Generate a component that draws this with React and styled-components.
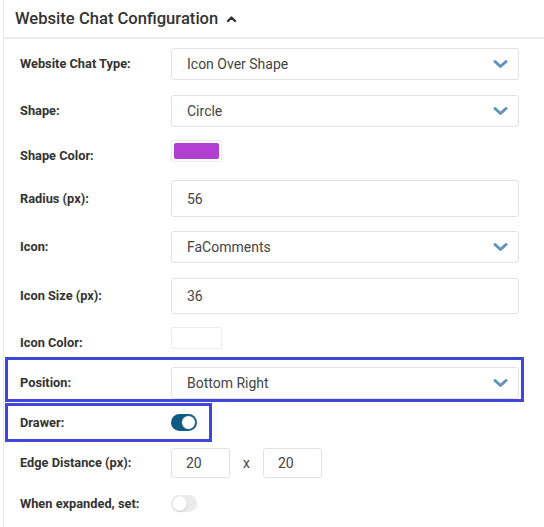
import React from 'react';
import styled, { createGlobalStyle } from 'styled-components';

const GlobalStyle = createGlobalStyle`
  body {
    margin: 0;
    background: #fff;
    font-family: Roboto, "Liberation Sans", sans-serif;
  }
`;

const Panel = styled.div`
  margin-left: 3px;
  width: 541px;
  height: 527px;
  border-left: 1px solid #e9e9e9;
  box-sizing: border-box;
  overflow: hidden;
`;

const Header = styled.div`
  display: flex;
  align-items: center;
  gap: 8px;
  height: 37px;
  padding-left: 11px;
  border-bottom: 2px solid #ebebeb;
  font-size: 16.6px;
  font-weight: 500;
  color: #333;
`;

const Body = styled.div`
  padding: 9px 0 0 16px;
`;

const Row = styled.div`
  display: grid;
  grid-template-columns: 151px auto;
  align-items: ${p => (p.$top ? 'start' : 'center')};
  margin-top: ${p => p.$mt || 0}px;
`;

const Label = styled.label`
  font-size: 12.8px;
  font-weight: 700;
  line-height: 16px;
  color: #333;
  padding-top: ${p => (p.$offset ? 8 : 0)}px;
`;

const Highlight = styled.div`
  width: fit-content;
  margin-left: -15px;
  margin-top: ${p => p.$mt || 0}px;
  border: 3px solid #3f46da;
  padding: ${p => p.$pad};
`;

const SelectBox = styled.div`
  display: flex;
  align-items: center;
  justify-content: space-between;
  width: 348px;
  height: 32px;
  box-sizing: border-box;
  padding: 0 10px 0 15px;
  border: 1px solid #e2e2e2;
  border-radius: 3px;
  font-size: 14px;
  color: #444;
`;

const TextInput = styled.div`
  display: flex;
  align-items: center;
  width: ${p => p.$w || 348}px;
  height: ${p => p.$h || 36}px;
  box-sizing: border-box;
  padding-left: ${p => p.$pl || 15}px;
  border: 1px solid #e2e2e2;
  border-radius: 3px;
  font-size: 14px;
  color: #444;
`;

const Swatch = styled.div`
  width: 51px;
  height: 22px;
  box-sizing: border-box;
  border: 1px solid #ececec;
  border-radius: 2px;
  padding: 2px;
  & > div {
    width: 100%;
    height: 100%;
    border-radius: 2px;
    background: ${p => p.$color};
  }
`;

const Pair = styled.div`
  display: flex;
  align-items: center;
`;

const Times = styled.span`
  width: 33px;
  text-align: center;
  font-size: 14px;
  color: #444;
`;

const Toggle = styled.div`
  position: relative;
  width: 26px;
  height: 17px;
  border-radius: 9px;
  background: ${p => (p.$on ? '#0e5a83' : '#ebebeb')};
  &::after {
    content: '';
    position: absolute;
    top: 1px;
    left: ${p => (p.$on ? '10px' : '1px')};
    width: 13px;
    height: 13px;
    border-radius: 50%;
    background: #fff;
    border: 1px solid ${p => (p.$on ? '#0e5a83' : '#f2f2f2')};
    box-shadow: ${p => (p.$on ? 'none' : '0 1px 2px rgba(0,0,0,0.12)')};
  }
`;

const ChevronDown = () => (
  <svg width="15" height="10" viewBox="0 0 15 10">
    <path d="M2 2.5 L7.5 7.5 L13 2.5" fill="none" stroke="#5f93ba" strokeWidth="3" strokeLinecap="round" strokeLinejoin="round" />
  </svg>
);

const ChevronUp = () => (
  <svg width="11" height="8" viewBox="0 0 11 8">
    <path d="M2 6 L5.5 2.5 L9 6" fill="none" stroke="#333" strokeWidth="2.4" strokeLinecap="round" strokeLinejoin="round" />
  </svg>
);

const Select = ({ value }) => (
  <SelectBox>
    <span>{value}</span>
    <ChevronDown />
  </SelectBox>
);

export default function App() {
  return (
    <Panel>
      <GlobalStyle />
      <Header>
        Website Chat Configuration
        <ChevronUp />
      </Header>
      <Body>
        <Row>
          <Label>Website Chat Type:</Label>
          <Select value="Icon Over Shape" />
        </Row>
        <Row $mt={15}>
          <Label>Shape:</Label>
          <Select value="Circle" />
        </Row>
        <Row $mt={13} $top>
          <Label $offset>Shape Color:</Label>
          <Swatch $color="#b13fcf"><div /></Swatch>
        </Row>
        <Row $mt={16}>
          <Label>Radius (px):</Label>
          <TextInput $h={37}>56</TextInput>
        </Row>
        <Row $mt={14}>
          <Label>Icon:</Label>
          <Select value="FaComments" />
        </Row>
        <Row $mt={15}>
          <Label>Icon Size (px):</Label>
          <TextInput>36</TextInput>
        </Row>
        <Row $mt={13} $top>
          <Label $offset>Icon Color:</Label>
          <Swatch $color="#fff"><div /></Swatch>
        </Row>
        <Highlight $mt={6} $pad="7px 2px 0 12px">
          <Row>
            <Label>Position:</Label>
            <Select value="Bottom Right" />
          </Row>
        </Highlight>
        <Highlight $mt={1} $pad="8px 12px 8px 12px">
          <Row>
            <Label>Drawer:</Label>
            <Toggle $on />
          </Row>
        </Highlight>
        <Row $mt={6}>
          <Label>Edge Distance (px):</Label>
          <Pair>
            <TextInput $w={59} $h={30} $pl={14}>20</TextInput>
            <Times>x</Times>
            <TextInput $w={59} $h={30} $pl={14}>20</TextInput>
          </Pair>
        </Row>
        <Row $mt={17}>
          <Label>When expanded, set:</Label>
          <Toggle />
        </Row>
      </Body>
    </Panel>
  );
}
